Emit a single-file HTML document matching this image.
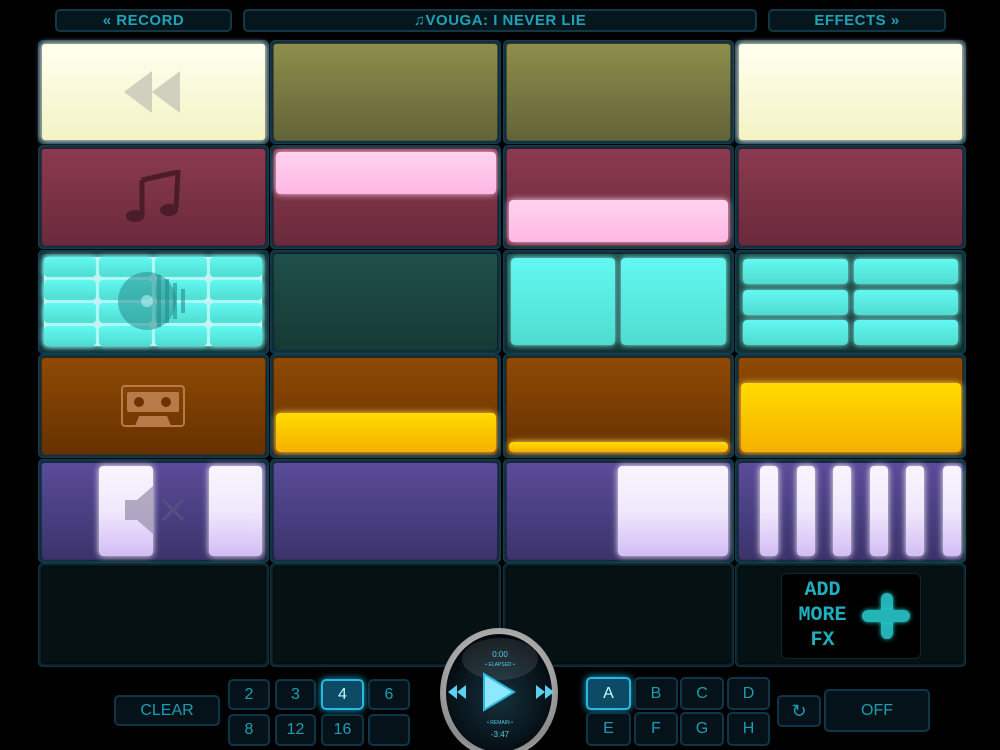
<!DOCTYPE html>
<html><head><meta charset="utf-8"><style>
*{margin:0;padding:0;box-sizing:border-box}
html,body{width:1000px;height:750px;overflow:hidden}
body{background:#000;position:relative;font-family:"Liberation Sans",sans-serif}
.a{position:absolute}
.hb{position:absolute;border:2px solid #123848;border-radius:5px;background:#06161d;color:#1fa3b8;font-size:15px;text-align:center;line-height:19px;letter-spacing:0.5px;font-family:"Liberation Sans",sans-serif;font-weight:bold}
.cell{position:absolute;width:231px;height:104px;background:#0d3040;border-radius:5px;padding:3px;box-shadow:inset 0 0 2px #2a5a6a}
.cell>.f{width:100%;height:100%;border-radius:4px;border:1px solid rgba(0,0,0,.4)}
.olive{background:linear-gradient(#8e8e4b,#63633a)}
.cream{background:linear-gradient(#ffffef,#f3f3c4);box-shadow:0 0 6px #fff}
.mar{background:linear-gradient(#8b3a4f,#6a2a3b)}
.tea{background:linear-gradient(#1f5049,#163935)}
.org{background:linear-gradient(#8f4a04,#663200)}
.pur{background:linear-gradient(#5a4c99,#3c336c)}
.drk{background:#061114}
.pink{background:linear-gradient(#ffd2ee,#ffb8e4);border-radius:4px;box-shadow:0 0 7px #ffd0f0}
.cy{background:linear-gradient(#62f8f2,#4fdccf);border-radius:4px;box-shadow:0 0 6px #8ff}
.yl{background:linear-gradient(#ffdc00,#f5b000);border-radius:4px;box-shadow:0 0 7px #ffe060}
.wl{background:linear-gradient(#f8f5ff,#f0e8fb 50%,#d3bdf5);border-radius:4px;box-shadow:0 0 7px #fff}
.btn{position:absolute;border:2px solid #0f3546;border-radius:5px;background:#051219;color:#1a9fb2;font-family:"Liberation Sans",sans-serif;font-size:16px;text-align:center}
.on{border-color:#2ab8e0;background:#0d4a66;color:#bff;box-shadow:0 0 8px #1ab0e0}
</style></head><body>
<div class="hb" style="left:55px;top:9px;width:177px;height:23px">« RECORD</div>
<div class="hb" style="left:243px;top:9px;width:514px;height:23px">♫VOUGA: I NEVER LIE</div>
<div class="hb" style="left:768px;top:9px;width:178px;height:23px">EFFECTS »</div>

<div class="cell" style="left:38px;top:40px"><div class="f cream"></div></div>
<div class="cell" style="left:270px;top:40px"><div class="f olive"></div></div>
<div class="cell" style="left:503px;top:40px"><div class="f olive"></div></div>
<div class="cell" style="left:735px;top:40px"><div class="f cream"></div></div>
<svg class="a" style="left:124px;top:71px" width="58" height="42"><polygon points="0,21 28,0 28,42" fill="#cfd0bd"/><polygon points="28,21 56,0 56,42" fill="#cfd0bd"/></svg>

<div class="cell" style="left:38px;top:145px"><div class="f mar"></div></div>
<div class="cell" style="left:270px;top:145px"><div class="f mar"></div></div>
<div class="cell" style="left:503px;top:145px"><div class="f mar"></div></div>
<div class="cell" style="left:735px;top:145px"><div class="f mar"></div></div>
<svg class="a" style="left:122px;top:170px" width="60" height="54"><path d="M20 10 L56 2 L54 38" stroke="#4a1d28" stroke-width="5" fill="none"/><path d="M20 10 L20 46" stroke="#4a1d28" stroke-width="5"/><ellipse cx="13" cy="46" rx="9" ry="6" fill="#4a1d28"/><ellipse cx="47" cy="40" rx="9" ry="6" fill="#4a1d28"/></svg>
<div class="a pink" style="left:276px;top:152px;width:220px;height:42px"></div>
<div class="a pink" style="left:509px;top:200px;width:219px;height:42px"></div>

<div class="cell" style="left:38px;top:250px"><div class="f tea"></div></div>
<div class="cell" style="left:270px;top:250px"><div class="f tea"></div></div>
<div class="cell" style="left:503px;top:250px"><div class="f tea"></div></div>
<div class="cell" style="left:735px;top:250px"><div class="f tea"></div></div>
<div class="a" style="left:44px;top:257px;width:218px;height:89px;display:grid;grid-template-columns:repeat(4,1fr);grid-template-rows:repeat(4,1fr);gap:3px;background:#d8f0ee;border-radius:4px;box-shadow:0 0 7px #8ff">
<div class="cy"></div><div class="cy"></div><div class="cy"></div><div class="cy"></div><div class="cy"></div><div class="cy"></div><div class="cy"></div><div class="cy"></div><div class="cy"></div><div class="cy"></div><div class="cy"></div><div class="cy"></div><div class="cy"></div><div class="cy"></div><div class="cy"></div><div class="cy"></div></div>
<svg class="a" style="left:117px;top:271px" width="74" height="60"><circle cx="30" cy="30" r="29" fill="rgba(40,140,140,.55)"/><circle cx="30" cy="30" r="6" fill="rgba(200,255,255,.5)"/><path d="M42 4 V56 M50 8 V52 M58 12 V48 M66 18 V42" stroke="rgba(40,140,140,.6)" stroke-width="4"/></svg>
<div class="a cy" style="left:511px;top:258px;width:104px;height:87px"></div>
<div class="a cy" style="left:621px;top:258px;width:105px;height:87px"></div>
<div class="a cy" style="left:743px;top:259px;width:105px;height:25px"></div>
<div class="a cy" style="left:854px;top:259px;width:104px;height:25px"></div>
<div class="a cy" style="left:743px;top:290px;width:105px;height:25px"></div>
<div class="a cy" style="left:854px;top:290px;width:104px;height:25px"></div>
<div class="a cy" style="left:743px;top:320px;width:105px;height:25px"></div>
<div class="a cy" style="left:854px;top:320px;width:104px;height:25px"></div>

<div class="cell" style="left:38px;top:354px"><div class="f org"></div></div>
<div class="cell" style="left:270px;top:354px"><div class="f org"></div></div>
<div class="cell" style="left:503px;top:354px"><div class="f org"></div></div>
<div class="cell" style="left:735px;top:354px"><div class="f org"></div></div>
<svg class="a" style="left:121px;top:385px" width="64" height="42"><rect x="1" y="1" width="62" height="40" rx="3" fill="none" stroke="#b97a4a" stroke-width="2"/><rect x="6" y="7" width="52" height="20" rx="2" fill="#b97a4a"/><circle cx="18" cy="17" r="5" fill="#6a3300"/><circle cx="45" cy="17" r="5" fill="#6a3300"/><path d="M14 41 L18 31 H46 L50 41" fill="#b97a4a"/></svg>
<div class="a yl" style="left:276px;top:413px;width:220px;height:39px"></div>
<div class="a yl" style="left:509px;top:442px;width:219px;height:10px"></div>
<div class="a yl" style="left:741px;top:383px;width:220px;height:69px"></div>

<div class="cell" style="left:38px;top:459px"><div class="f pur"></div></div>
<div class="cell" style="left:270px;top:459px"><div class="f pur"></div></div>
<div class="cell" style="left:503px;top:459px"><div class="f pur"></div></div>
<div class="cell" style="left:735px;top:459px"><div class="f pur"></div></div>
<div class="a wl" style="left:99px;top:466px;width:54px;height:90px"></div>
<div class="a wl" style="left:209px;top:466px;width:53px;height:90px"></div>
<svg class="a" style="left:123px;top:484px" width="64" height="52"><polygon points="2,16 14,16 30,2 30,50 14,36 2,36" fill="rgba(150,140,170,.7)"/><path d="M40 16 L60 36 M60 16 L40 36" stroke="rgba(90,80,130,.9)" stroke-width="3"/></svg>
<div class="a wl" style="left:618px;top:466px;width:110px;height:90px"></div>
<div class="a wl" style="left:760px;top:466px;width:18px;height:90px"></div>
<div class="a wl" style="left:797px;top:466px;width:18px;height:90px"></div>
<div class="a wl" style="left:833px;top:466px;width:18px;height:90px"></div>
<div class="a wl" style="left:870px;top:466px;width:18px;height:90px"></div>
<div class="a wl" style="left:906px;top:466px;width:18px;height:90px"></div>
<div class="a wl" style="left:943px;top:466px;width:18px;height:90px"></div>

<div class="cell" style="left:38px;top:563px;background:#0a1e26"><div class="f drk"></div></div>
<div class="cell" style="left:270px;top:563px;background:#0a1e26"><div class="f drk"></div></div>
<div class="cell" style="left:503px;top:563px;background:#0a1e26"><div class="f drk"></div></div>
<div class="cell" style="left:735px;top:563px;background:#0a1e26"><div class="f drk"></div></div>
<div class="a" style="left:781px;top:573px;width:140px;height:86px;background:#000;border:1px solid #0d2630;border-radius:6px"></div>
<div class="a" style="left:790px;top:578px;width:65px;color:#1fb0c0;font-family:'Liberation Mono',monospace;font-size:20px;font-weight:bold;line-height:25px;text-align:center">ADD<br>MORE<br>FX</div>
<div class="a" style="left:881px;top:593px;width:12px;height:46px;background:#24b4b8;border-radius:6px;box-shadow:0 0 5px #2cc"></div>
<div class="a" style="left:862px;top:610px;width:48px;height:12px;background:#24b4b8;border-radius:6px;box-shadow:0 0 5px #2cc"></div>

<div class="btn" style="left:114px;top:695px;width:106px;height:31px;line-height:27px">CLEAR</div>
<div class="btn" style="left:228px;top:679px;width:42px;height:31px;line-height:27px">2</div>
<div class="btn" style="left:275px;top:679px;width:41px;height:31px;line-height:27px">3</div>
<div class="btn on" style="left:321px;top:679px;width:43px;height:31px;line-height:27px">4</div>
<div class="btn" style="left:368px;top:679px;width:42px;height:31px;line-height:27px">6</div>
<div class="btn" style="left:228px;top:714px;width:42px;height:32px;line-height:28px">8</div>
<div class="btn" style="left:275px;top:714px;width:41px;height:32px;line-height:28px">12</div>
<div class="btn" style="left:321px;top:714px;width:43px;height:32px;line-height:28px">16</div>
<div class="btn" style="left:368px;top:714px;width:42px;height:32px"></div>

<div class="a" style="left:440px;top:628px;width:118px;height:130px;border-radius:50%;background:radial-gradient(circle at 50% 40%,#f4f4f4,#8a8a8a 70%,#d0d0d0);padding:6px">
<div style="width:100%;height:100%;border-radius:50%;background:radial-gradient(circle at 50% 55%,#16313e,#02080c 75%)"></div></div>
<div class="a" style="left:462px;top:638px;width:76px;height:42px;border-radius:50%;background:rgba(255,255,255,.1)"></div>
<div class="a" style="left:460px;top:650px;width:80px;text-align:center;color:#4ccde8;font-size:8px;line-height:9px">0:00<br><span style="font-size:5px">• ELAPSED •</span></div>
<svg class="a" style="left:446px;top:670px" width="110" height="44"><polygon points="38,4 68,22 38,40" fill="#8de8ff" stroke="#2ab8e0" stroke-width="2"/><polygon points="2,22 11,15 11,29" fill="#5cd0f0"/><polygon points="11,22 20,15 20,29" fill="#5cd0f0"/><polygon points="108,22 99,15 99,29" fill="#5cd0f0"/><polygon points="99,22 90,15 90,29" fill="#5cd0f0"/></svg>
<div class="a" style="left:460px;top:716px;width:80px;text-align:center;color:#4ccde8;font-size:8px;line-height:11px"><span style="font-size:5px">• REMAIN •</span><br>-3:47</div>

<div class="btn on" style="left:586px;top:677px;width:45px;height:33px;line-height:29px">A</div>
<div class="btn" style="left:634px;top:677px;width:44px;height:33px;line-height:29px">B</div>
<div class="btn" style="left:680px;top:677px;width:44px;height:33px;line-height:29px">C</div>
<div class="btn" style="left:727px;top:677px;width:43px;height:33px;line-height:29px">D</div>
<div class="btn" style="left:586px;top:712px;width:45px;height:34px;line-height:30px">E</div>
<div class="btn" style="left:634px;top:712px;width:44px;height:34px;line-height:30px">F</div>
<div class="btn" style="left:680px;top:712px;width:44px;height:34px;line-height:30px">G</div>
<div class="btn" style="left:727px;top:712px;width:43px;height:34px;line-height:30px">H</div>
<div class="btn" style="left:777px;top:695px;width:44px;height:32px;line-height:28px;font-size:18px">↻</div>
<div class="btn" style="left:824px;top:689px;width:106px;height:43px;line-height:39px">OFF</div>
</body></html>
